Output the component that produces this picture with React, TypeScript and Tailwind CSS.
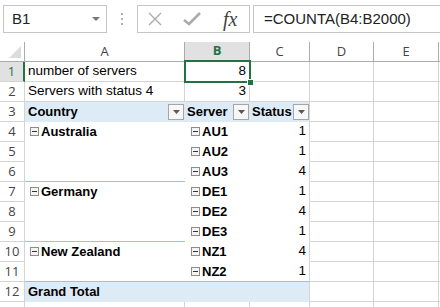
import type { ReactNode } from "react";

const GRID = "border-[#d4d4d4]";

const MinusBox = () => (
  <span className="inline-flex items-center justify-center w-[9px] h-[9px] border border-[#8c8c8c] bg-[#f4f4f4] mr-[2px] shrink-0">
    <span className="block w-[5px] h-[1px] bg-[#333]" />
  </span>
);

const FilterBtn = () => (
  <span className="w-[16px] h-[16px] border border-[#a6a6a6] bg-[#f7f7f7] flex items-center justify-center shrink-0">
    <svg width="7" height="4" viewBox="0 0 7 4">
      <path d="M0 0h7L3.5 4z" fill="#595959" />
    </svg>
  </span>
);

type PivotRow = {
  n: number;
  country?: string;
  server: string;
  status: number;
  lineA?: boolean;
  lineAll?: boolean;
};

const pivotRows: PivotRow[] = [
  { n: 4, country: "Australia", server: "AU1", status: 1 },
  { n: 5, server: "AU2", status: 1 },
  { n: 6, server: "AU3", status: 4, lineA: true },
  { n: 7, country: "Germany", server: "DE1", status: 1 },
  { n: 8, server: "DE2", status: 4 },
  { n: 9, server: "DE3", status: 1, lineA: true },
  { n: 10, country: "New Zealand", server: "NZ1", status: 4 },
  { n: 11, server: "NZ2", status: 1, lineAll: true },
];

const RowHead = ({ n, active }: { n: number | string; active?: boolean }) => (
  <div
    className={
      active
        ? "w-[25px] h-[20px] shrink-0 border-b border-[#d4d4d4] border-r-2 border-r-[#217346] bg-[#e1e1e1] text-[#217346] flex items-center justify-center text-[13px]"
        : "w-[25px] h-[20px] shrink-0 border-b border-r border-[#d4d4d4] text-[#444] flex items-center justify-center text-[13px]"
    }
    style={{ fontFamily: "'Open Sans', 'Liberation Sans', sans-serif" }}
  >
    {n}
  </div>
);

const Blank = ({ w }: { w: string }) => (
  <div className={`${w} h-[20px] shrink-0 border-b border-r ${GRID}`} />
);

const Tail = () => (
  <>
    <div className="w-[64px] h-[20px] shrink-0 border-b border-r border-[#d4d4d4]" />
    <div className="w-[65px] h-[20px] shrink-0 border-b border-r border-[#d4d4d4]" />
    <div className="w-[40px] h-[20px] shrink-0 border-b border-[#d4d4d4]" />
  </>
);

const Row = ({ children }: { children: ReactNode }) => (
  <div className="flex h-[20px]">{children}</div>
);

export default function App() {
  return (
    <div
      className="w-[440px] h-[307px] bg-white overflow-hidden relative text-[13.5px] text-black"
      style={{ fontFamily: "'Liberation Sans', Arial, sans-serif" }}
    >
      {/* formula bar */}
      <div className="h-[42px] flex items-start pt-[5px] pl-[3px]">
        <div className="w-[104px] h-[28px] border border-[#c6c6c6] flex items-center pl-[8px] pr-[6px] justify-between">
          <span className="text-[15px] text-[#222]">B1</span>
          <svg width="8" height="4" viewBox="0 0 8 4">
            <path d="M0 0h8L4 4z" fill="#777" />
          </svg>
        </div>
        <div className="w-[30px] h-[28px] flex flex-col items-center justify-center gap-[3px]">
          <span className="block w-[2px] h-[2px] bg-[#b0b0b0]" />
          <span className="block w-[2px] h-[2px] bg-[#b0b0b0]" />
          <span className="block w-[2px] h-[2px] bg-[#b0b0b0]" />
        </div>
        <div className="w-[113px] h-[28px] border border-[#c6c6c6] flex items-center">
          <svg width="16" height="16" viewBox="0 0 16 16" className="ml-[9px]">
            <path d="M2 2L14 14M14 2L2 14" stroke="#ababab" strokeWidth="1.4" />
          </svg>
          <svg width="18" height="16" viewBox="0 0 18 16" className="ml-[20px]">
            <path d="M1 9L6 13L17 2" stroke="#ababab" strokeWidth="2.6" fill="none" />
          </svg>
          <span
            className="ml-[22px] italic text-[20px] text-[#444] leading-none"
            style={{ fontFamily: "'Liberation Serif', 'DejaVu Serif', serif" }}
          >
            fx
          </span>
        </div>
        <div className="flex-1 h-[28px] border border-r-0 border-[#c6c6c6] ml-[3px] flex items-center pl-[10px]">
          <span className="text-[15px] text-[#222]">=COUNTA(B4:B2000)</span>
        </div>
      </div>

      {/* column headers */}
      <div
        className="flex h-[20px] text-[13px] text-[#444]"
        style={{ fontFamily: "'Open Sans', 'Liberation Sans', sans-serif" }}
      >
        <div className="w-[25px] h-[20px] shrink-0 border-b border-r border-[#ababab] relative">
          <svg width="12" height="12" viewBox="0 0 12 12" className="absolute right-[3px] bottom-[3px]">
            <path d="M12 0V12H0z" fill="#dcdcdc" />
          </svg>
        </div>
        <div className="w-[160px] h-[20px] shrink-0 border-b border-r border-[#ababab] flex items-center justify-center">A</div>
        <div className="w-[65px] h-[20px] shrink-0 border-b-2 border-b-[#217346] border-r border-r-[#ababab] bg-[#e1e1e1] text-[#217346] font-bold flex items-center justify-center">B</div>
        <div className="w-[60px] h-[20px] shrink-0 border-b border-r border-[#ababab] flex items-center justify-center">C</div>
        <div className="w-[64px] h-[20px] shrink-0 border-b border-r border-[#ababab] flex items-center justify-center">D</div>
        <div className="w-[65px] h-[20px] shrink-0 border-b border-r border-[#ababab] flex items-center justify-center">E</div>
        <div className="w-[40px] h-[20px] shrink-0 border-b border-[#ababab]" />
      </div>

      {/* row 1 */}
      <Row>
        <RowHead n={1} active />
        <div className="w-[160px] h-[20px] shrink-0 border-b border-r border-[#d4d4d4] pl-[3px] flex items-center">number of servers</div>
        <div className="w-[65px] h-[20px] shrink-0 border-b border-r border-[#d4d4d4] pr-[3px] flex items-center justify-end">8</div>
        <Blank w="w-[60px]" />
        <Tail />
      </Row>
      {/* row 2 */}
      <Row>
        <RowHead n={2} />
        <div className="w-[160px] h-[20px] shrink-0 border-b border-r border-[#d4d4d4] pl-[3px] flex items-center">Servers with status 4</div>
        <div className="w-[65px] h-[20px] shrink-0 border-b border-r border-[#d4d4d4] pr-[3px] flex items-center justify-end">3</div>
        <Blank w="w-[60px]" />
        <Tail />
      </Row>
      {/* row 3 pivot header */}
      <Row>
        <RowHead n={3} />
        <div className="w-[285px] h-[20px] shrink-0 bg-[#ddebf7] border-b border-b-[#ddebf7] border-r border-r-[#d4d4d4] flex font-bold text-[13px]">
          <div className="w-[160px] flex items-center justify-between pl-[3px] pr-[1px]">
            <span>Country</span>
            <FilterBtn />
          </div>
          <div className="w-[65px] flex items-center justify-between pl-[2px] pr-[1px]">
            <span>Server</span>
            <FilterBtn />
          </div>
          <div className="w-[59px] flex items-center justify-between pl-[2px] pr-[0px]">
            <span>Status</span>
            <FilterBtn />
          </div>
        </div>
        <Tail />
      </Row>
      {pivotRows.map((r) => (
        <Row key={r.n}>
          <RowHead n={r.n} />
          <div
            className={
              r.lineA || r.lineAll
                ? "w-[160px] h-[20px] shrink-0 border-b border-[#9bc2e6] pl-[5px] flex items-center font-bold text-[13px]"
                : "w-[160px] h-[20px] shrink-0 border-b border-white pl-[5px] flex items-center font-bold text-[13px]"
            }
          >
            {r.country && (
              <>
                <MinusBox />
                <span>{r.country}</span>
              </>
            )}
          </div>
          <div
            className={
              r.lineAll
                ? "w-[65px] h-[20px] shrink-0 border-b border-[#9bc2e6] pl-[6px] flex items-center font-bold text-[13px]"
                : "w-[65px] h-[20px] shrink-0 border-b border-white pl-[6px] flex items-center font-bold text-[13px]"
            }
          >
            <MinusBox />
            <span>{r.server}</span>
          </div>
          <div
            className={
              r.lineAll
                ? "w-[60px] h-[20px] shrink-0 border-b border-b-[#9bc2e6] border-r border-r-[#d4d4d4] pr-[3px] flex items-center justify-end"
                : "w-[60px] h-[20px] shrink-0 border-b border-b-white border-r border-r-[#d4d4d4] pr-[3px] flex items-center justify-end"
            }
          >
            {r.status}
          </div>
          <Tail />
        </Row>
      ))}
      {/* row 12 grand total */}
      <Row>
        <RowHead n={12} />
        <div className="w-[285px] h-[20px] shrink-0 bg-[#ddebf7] border-b border-b-[#ddebf7] border-r border-r-[#d4d4d4] pl-[3px] flex items-center font-bold text-[13px]">
          Grand Total
        </div>
        <Tail />
      </Row>
      {/* row 13 */}
      <Row>
        <RowHead n="" />
        <Blank w="w-[160px]" />
        <Blank w="w-[65px]" />
        <Blank w="w-[60px]" />
        <Tail />
      </Row>

      {/* active cell */}
      <div className="absolute left-[184px] top-[60px] w-[67px] h-[23px] border-2 border-[#217346] pointer-events-none" />
      <div className="absolute left-[247px] top-[79px] w-[7px] h-[7px] bg-[#217346] border border-white" />
    </div>
  );
}
